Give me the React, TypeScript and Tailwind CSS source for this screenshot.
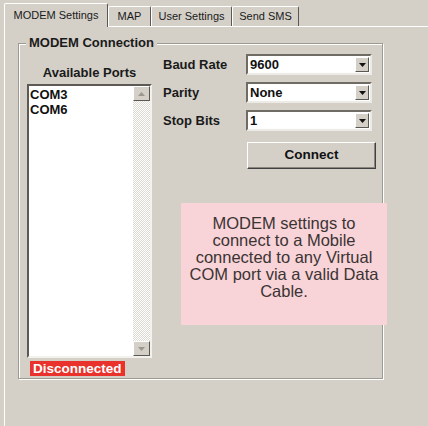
import React from "react";

const Arrow = ({ up, color }: { up?: boolean; color: string }) => (
  <svg width="7" height="4" viewBox="0 0 7 4">
    <path d={up ? "M0 4 L3.5 0 L7 4 Z" : "M0 0 L7 0 L3.5 4 Z"} fill={color} />
  </svg>
);

const Combo = ({ value }: { value: string }) => (
  <div className="w-[126px] h-[21px] bg-white border-2 border-t-[#6f6c66] border-l-[#6f6c66] border-b-[#ecebe6] border-r-[#ecebe6] flex items-center justify-between pl-[2px] pr-[1px]">
    <span className="text-[13px] font-bold leading-none text-[#111]">{value}</span>
    <div className="w-[14px] h-[15px] bg-[#d4d0c8] border border-t-white border-l-white border-b-[#5a5852] border-r-[#5a5852] flex items-center justify-center">
      <Arrow color="#111" />
    </div>
  </div>
);

const tabs = [
  { label: "MAP", w: "w-[43px]" },
  { label: "User Settings", w: "w-[81px]" },
  { label: "Send SMS", w: "w-[67px]" },
];

const App = () => {
  return (
    <div
      className="w-[428px] h-[426px] bg-[#d4d0c8] overflow-hidden flex flex-col text-[#1a1a1a] relative"
      style={{ fontFamily: '"Liberation Sans", Arial, sans-serif' }}
    >
      {/* tab strip */}
      <div className="h-[26px] flex items-end pl-[4px]">
        <div className="w-[104px] h-[24px] mb-[-1px] relative z-10 bg-[#d4d0c8] border-t border-l border-r border-t-white border-l-white border-r-[#5a5852] rounded-t-[2px] flex items-center justify-center text-[11px] pb-[1px]">
          MODEM Settings
        </div>
        {tabs.map((t) => (
          <div
            key={t.label}
            className={`${t.w} h-[20px] border-t border-l border-r border-t-white border-l-white border-r-[#5a5852] rounded-t-[2px] flex items-center justify-center text-[11px]`}
          >
            {t.label}
          </div>
        ))}
      </div>

      {/* tab panel */}
      <div className="flex-1 border-t border-l border-white ml-[4px] pl-[13px] pt-[16px]">
        <div className="w-[365px] h-[336px] relative border border-[#9d9a92] shadow-[inset_1px_1px_0_#fff,1px_1px_0_#fff] flex">
          <div className="absolute -top-[9px] left-[7px] px-[3px] bg-[#d4d0c8] text-[13px] font-bold leading-[16px]">
            MODEM Connection
          </div>

          {/* ports column */}
          <div className="ml-[8px] pt-[21px] flex flex-col">
            <div className="w-[125px] text-center text-[13px] font-bold leading-[16px]">
              Available Ports
            </div>
            <div className="mt-[3px] w-[125px] h-[274px] bg-white border-2 border-t-[#5d5a55] border-l-[#5d5a55] border-b-[#f2f1ee] border-r-[#f2f1ee] flex">
              <div className="flex-1 pl-[1px] pt-[1px] text-[13px] font-bold leading-[15px] text-[#111]">
                <div>COM3</div>
                <div>COM6</div>
              </div>
              <div className="w-[17px] flex flex-col bg-[repeating-conic-gradient(#ffffff_0_25%,#dcd9d2_0_50%)] bg-[length:2px_2px]">
                <div className="h-[15px] bg-[#d4d0c8] border border-t-white border-l-white border-b-[#5a5852] border-r-[#5a5852] flex items-center justify-center">
                  <Arrow up color="#9a978f" />
                </div>
                <div className="flex-1" />
                <div className="h-[15px] bg-[#d4d0c8] border border-t-white border-l-white border-b-[#5a5852] border-r-[#5a5852] flex items-center justify-center">
                  <Arrow color="#9a978f" />
                </div>
              </div>
            </div>
            <div className="mt-[3px] ml-[3px] w-[95px] bg-[#e8322b] text-white text-[13.5px] font-bold leading-[15px] pl-[3px]">
              Disconnected
            </div>
          </div>

          {/* settings column */}
          <div className="ml-[11px] pt-[10px] flex flex-col gap-[7px]">
            {[
              ["Baud Rate", "9600"],
              ["Parity", "None"],
              ["Stop Bits", "1"],
            ].map(([label, value]) => (
              <div key={label} className="flex items-center h-[21px]">
                <div className="w-[83px] text-[13px] font-bold">{label}</div>
                <Combo value={value} />
              </div>
            ))}
            <button className="mt-[4px] ml-[84px] w-[129px] h-[27px] bg-[#d4d0c8] border border-t-white border-l-white border-b-[#404040] border-r-[#404040] shadow-[inset_-1px_-1px_0_#8a877f] text-[13.5px] font-bold text-[#111]">
              Connect
            </button>
          </div>
        </div>
      </div>

      {/* info note */}
      <div className="absolute left-[181px] top-[203px] w-[206px] h-[122px] bg-[#f8d3d7] pt-[12px] text-center text-[16.5px] leading-[17px] text-[#3b3434]">
        MODEM settings to
        <br />
        connect to a Mobile
        <br />
        connected to any Virtual
        <br />
        COM port via a valid Data
        <br />
        Cable.
      </div>
    </div>
  );
};

export default App;
